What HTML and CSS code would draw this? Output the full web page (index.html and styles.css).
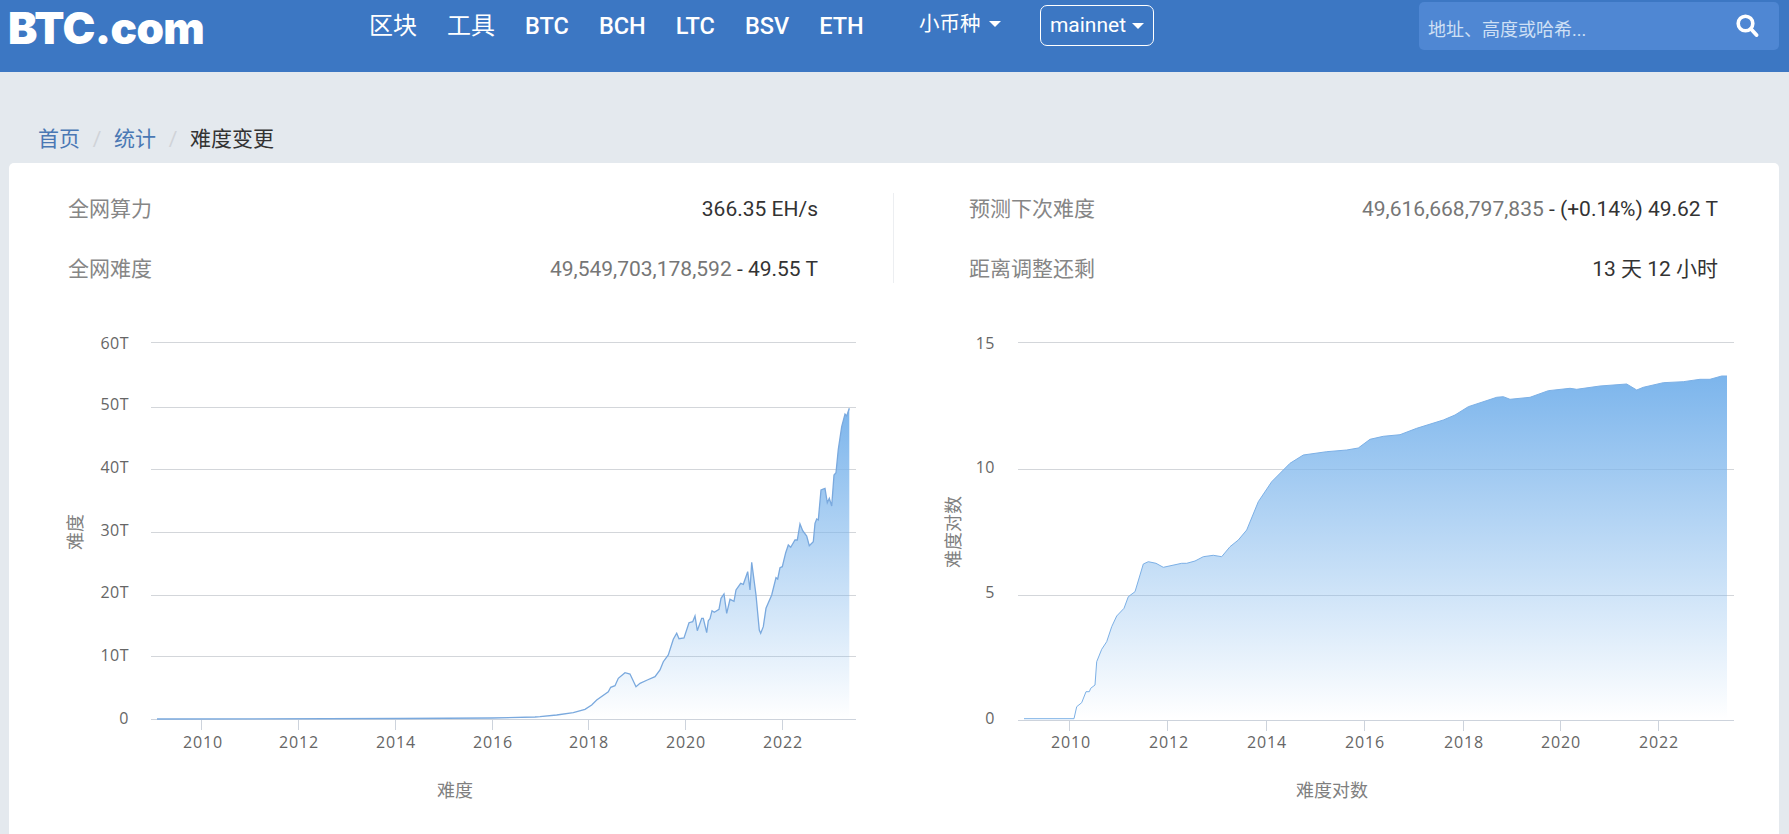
FILE: index.html
```html
<!DOCTYPE html>
<html lang="zh-CN">
<head>
<meta charset="utf-8">
<title>难度变更</title>
<link rel="stylesheet" href="styles.css">
</head>
<body>
<header class="topbar">
  <a class="logo">BTC.com</a>
  <nav class="nav">
    <a class="nav-item">区块</a>
    <a class="nav-item">工具</a>
    <a class="nav-item">BTC</a>
    <a class="nav-item">BCH</a>
    <a class="nav-item">LTC</a>
    <a class="nav-item">BSV</a>
    <a class="nav-item">ETH</a>
  </nav>
  <a class="coins">小币种<span class="caret"></span></a>
  <a class="network">mainnet<span class="caret"></span></a>
  <div class="search">
    <span class="search-text">地址、高度或哈希...</span>
    <svg class="search-icon" width="24" height="24" viewBox="0 0 24 24"><circle cx="10.500" cy="10.500" r="7.300" fill="none" stroke="#fff" stroke-width="3.600"/><path d="M16 16l5.500 6" stroke="#fff" stroke-width="3.800" stroke-linecap="round"/></svg>
  </div>
</header>

<ol class="crumbs">
  <li class="crumb-link">首页</li>
  <li class="crumb-sep">/</li>
  <li class="crumb-link">统计</li>
  <li class="crumb-sep">/</li>
  <li class="crumb-now">难度变更</li>
</ol>

<main class="card">
  <section class="stats">
    <div class="col col-left">
      <div class="row"><span class="label">全网算力</span><span class="value">366.35 EH/s</span></div>
      <div class="row"><span class="label">全网难度</span><span class="value"><span class="muted">49,549,703,178,592</span> - 49.55 T</span></div>
    </div>
    <div class="col col-right">
      <div class="row"><span class="label">预测下次难度</span><span class="value"><span class="muted">49,616,668,797,835</span> - (+0.14%) 49.62 T</span></div>
      <div class="row"><span class="label">距离调整还剩</span><span class="value">13 天 12 小时</span></div>
    </div>
  </section>

  <section class="charts">
    <svg class="chart chart-left" viewBox="60 330 830 504">
      <defs>
        <linearGradient id="fillL" x1="0" y1="0" x2="0" y2="1"><stop offset="0" stop-color="#7cb5ec"/><stop offset="1" stop-color="#7cb5ec" stop-opacity="0"/></linearGradient>
      </defs>
      <g class="grid">
        <path d="M151 342.500H856M151 407.500H856M151 469.500H856M151 532.500H856M151 595.500H856M151 656.500H856"/>
      </g>
      <path class="axis" d="M151 719.500H856M201.500 720V730M298.500 720V730M395.500 720V730M492.500 720V730M588.500 720V730M685.500 720V730M782.500 720V730"/>
      <path class="area" fill="url(#fillL)" d="M157 719L400 718.500L492 718L535 717L540 716.700L556.700 715L573.300 712.700L585 709.300L591.700 705L596.700 700L608.300 691.700L610.700 687.300L615 685.700L618.300 678.300L625 672.700L630 674L636 686.700L640 683.300L647.300 680L655 676.700L660 670L663.300 661.700L668.300 655L673.300 639.300L676.700 633.300L679 638.700L684 638L689 622.700L692.700 621.700L695 616L697.300 630.700L701.700 618.300L703.300 618.300L706.700 632.700L708.300 620.700L710 618.700L712 610.700L714.300 612.300L719 609.300L721 598.300L724 594L726.700 613.300L730 599.300L734 601.300L736 590L740.700 583.300L743.300 584.300L747.700 571.700L750 590L751.700 562.300L756 595L759.300 630L760.700 633.300L763.300 626.700L766 608.300L771.700 595L776 577.700L777.700 579L780 567.700L782.300 566.700L785.700 552.700L788.300 545L790.700 547.300L795 540L797.300 540L800 524L802.700 530.700L806.700 536L809.300 545.700L813.300 541.700L815 523.300L816.700 519L818.300 520L821 490L825 488.300L827.300 502.700L829.300 498.300L831.700 506L834 475L836 472.700L838.300 449.300L841.700 426.700L845 414L846.700 416L849.300 408.300V719Z"/>
      <path class="line line-strong" d="M157 719L400 718.500L492 718L535 717L540 716.700L556.700 715L573.300 712.700L585 709.300L591.700 705L596.700 700L608.300 691.700L610.700 687.300L615 685.700L618.300 678.300L625 672.700L630 674L636 686.700L640 683.300L647.300 680L655 676.700L660 670L663.300 661.700L668.300 655L673.300 639.300L676.700 633.300L679 638.700L684 638L689 622.700L692.700 621.700L695 616L697.300 630.700L701.700 618.300L703.300 618.300L706.700 632.700L708.300 620.700L710 618.700L712 610.700L714.300 612.300L719 609.300L721 598.300L724 594L726.700 613.300L730 599.300L734 601.300L736 590L740.700 583.300L743.300 584.300L747.700 571.700L750 590L751.700 562.300L756 595L759.300 630L760.700 633.300L763.300 626.700L766 608.300L771.700 595L776 577.700L777.700 579L780 567.700L782.300 566.700L785.700 552.700L788.300 545L790.700 547.300L795 540L797.300 540L800 524L802.700 530.700L806.700 536L809.300 545.700L813.300 541.700L815 523.300L816.700 519L818.300 520L821 490L825 488.300L827.300 502.700L829.300 498.300L831.700 506L834 475L836 472.700L838.300 449.300L841.700 426.700L845 414L846.700 416L849.300 408.300"/>
      <g class="ylabels">
        <text x="129" y="349">60T</text><text x="129" y="410">50T</text><text x="129" y="473">40T</text><text x="129" y="536">30T</text><text x="129" y="598">20T</text><text x="129" y="661">10T</text><text x="129" y="724">0</text>
      </g>
      <g class="xlabels">
        <text x="203" y="748">2010</text><text x="299" y="748">2012</text><text x="396" y="748">2014</text><text x="493" y="748">2016</text><text x="589" y="748">2018</text><text x="686" y="748">2020</text><text x="783" y="748">2022</text>
      </g>
      <text class="title" x="455" y="797">难度</text>
      <text class="title" transform="translate(82 532) rotate(-90)">难度</text>
    </svg>

    <svg class="chart chart-right" viewBox="900 330 860 504">
      <defs>
        <linearGradient id="fillR" x1="0" y1="0" x2="0" y2="1"><stop offset="0" stop-color="#7cb5ec"/><stop offset="1" stop-color="#7cb5ec" stop-opacity="0"/></linearGradient>
      </defs>
      <g class="grid">
        <path d="M1018 342.500H1734M1018 469.500H1734M1018 595.500H1734"/>
      </g>
      <path class="axis" d="M1018 720.500H1734M1069.500 721V731M1167.500 721V731M1266.500 721V731M1364.500 721V731M1463.500 721V731M1560.500 721V731M1658.500 721V731"/>
      <path class="area" fill="url(#fillR)" d="M1024 718.700L1074 718.700L1076.700 706.700L1081.700 702.700L1086 691.700L1089.300 691.700L1090.700 688.300L1095 685L1096.700 661.700L1101.700 649.300L1106.700 641.700L1111.700 626.700L1116.700 616L1124 608.300L1128.300 596.700L1135 591.700L1143.300 564L1148.300 561.700L1156 563.300L1163.300 567.300L1181.700 563.300L1186.700 563.300L1195 561L1203.300 556.700L1213.300 555.300L1221.700 556.700L1230 546.700L1238.300 540L1246.700 530L1258.300 501.700L1271.700 481.700L1290 463.300L1303.300 455L1326.700 451.700L1346.700 450L1358.300 448L1370 439.300L1383.300 436.300L1400 434.700L1416.700 428.300L1443.300 420L1455 415L1468.300 406.700L1496.700 397.300L1503.300 396.700L1510 399.300L1530 397.300L1548.300 390.700L1570 388.300L1576.700 389.300L1600 386L1626.700 384L1636.700 390L1643.300 387.300L1663.300 382.700L1683.300 381.700L1700 379.300L1710 379.300L1721.700 376L1727 376V719H1024Z"/>
      <path class="line" d="M1024 718.700L1074 718.700L1076.700 706.700L1081.700 702.700L1086 691.700L1089.300 691.700L1090.700 688.300L1095 685L1096.700 661.700L1101.700 649.300L1106.700 641.700L1111.700 626.700L1116.700 616L1124 608.300L1128.300 596.700L1135 591.700L1143.300 564L1148.300 561.700L1156 563.300L1163.300 567.300L1181.700 563.300L1186.700 563.300L1195 561L1203.300 556.700L1213.300 555.300L1221.700 556.700L1230 546.700L1238.300 540L1246.700 530L1258.300 501.700L1271.700 481.700L1290 463.300L1303.300 455L1326.700 451.700L1346.700 450L1358.300 448L1370 439.300L1383.300 436.300L1400 434.700L1416.700 428.300L1443.300 420L1455 415L1468.300 406.700L1496.700 397.300L1503.300 396.700L1510 399.300L1530 397.300L1548.300 390.700L1570 388.300L1576.700 389.300L1600 386L1626.700 384L1636.700 390L1643.300 387.300L1663.300 382.700L1683.300 381.700L1700 379.300L1710 379.300L1721.700 376L1727 376"/>
      <g class="ylabels">
        <text x="995" y="349">15</text><text x="995" y="473">10</text><text x="995" y="598">5</text><text x="995" y="724">0</text>
      </g>
      <g class="xlabels">
        <text x="1071" y="748">2010</text><text x="1169" y="748">2012</text><text x="1267" y="748">2014</text><text x="1365" y="748">2016</text><text x="1464" y="748">2018</text><text x="1561" y="748">2020</text><text x="1659" y="748">2022</text>
      </g>
      <text class="title" x="1332" y="797">难度对数</text>
      <text class="title" transform="translate(960 532) rotate(-90)">难度对数</text>
    </svg>
  </section>
</main>
</body>
</html>
```

FILE: styles.css
```css
* { box-sizing: border-box; }
html, body { margin: 0; height: 834px; overflow: hidden; }
body {
  background: #e4e9ee;
  font-family: Roboto, "Noto Sans CJK SC", sans-serif;
  color: #333;
}

.topbar {
  height: 72px;
  background: #3c77c3;
  display: flex;
  align-items: flex-start;
  padding-left: 8px;
  color: #fff;
}
.logo {
  width: 361px;
  flex: none;
  font-family: Inter, sans-serif;
  font-weight: 900;
  font-size: 44px;
  line-height: 56px;
  letter-spacing: -0.6px;
}
.nav { display: flex; gap: 30px; width: 497px; flex: none; padding-top: 10px; }
.nav-item { font-size: 23.500px; font-weight: 500; line-height: 32px; }
.nav-item:nth-child(-n+2) { font-size: 24px; font-weight: 400; }
.coins {
  width: 121px;
  flex: none;
  margin-left: 53px;
  font-size: 20.500px;
  line-height: 30px;
  padding-top: 9px;
  height: 39px;
  display: flex;
  align-items: center;
}
.caret {
  display: inline-block;
  width: 0;
  height: 0;
  margin-left: 8px;
  border-left: 6px solid transparent;
  border-right: 6px solid transparent;
  border-top: 6px solid #fff;
}
.network {
  width: 114px;
  height: 41px;
  flex: none;
  margin-top: 5px;
  padding-bottom: 2px;
  border: 1px solid #fff;
  border-radius: 7px;
  font-size: 21px;
  display: flex;
  align-items: center;
  justify-content: center;
}
.network .caret { margin-left: 6px; margin-top: 2px; }
.search {
  flex: none;
  width: 360px;
  height: 48px;
  margin: 2px 0 0 265px;
  padding: 0 20px 0 9px;
  background: #4f87d3;
  border-radius: 5px;
  display: flex;
  align-items: center;
  justify-content: space-between;
}
.search-text { font-size: 18px; color: #cfe0f5; margin-top: 3px; }
.search-icon { margin-top: -2px; }

.crumbs {
  list-style: none;
  margin: 0;
  padding: 52px 0 0 38px;
  height: 91px;
  display: flex;
  font-size: 21px;
  line-height: 30px;
}
.crumb-link { color: #4a78b4; }
.crumb-sep { color: #d0d3d8; width: 34px; text-align: center; }
.crumb-now { color: #333; }

.card {
  margin: 0 10px 0 9px;
  background: #fff;
  border-radius: 5px 5px 0 0;
  height: 700px;
}
.stats { display: flex; padding: 30px 61px 0 59px; }
.col { flex: none; height: 90px; display: flex; flex-direction: column; gap: 28px; }
.col-left { width: 750px; }
.col-right { width: 825px; margin-left: 75px; padding-left: 75px; border-left: 1px solid #eceef1; }
.row { display: flex; justify-content: space-between; line-height: 32px; flex: none; }
.label { font-size: 21px; color: #868686; }
.value { font-size: 21px; color: #333; }
.muted { color: #767676; }

.charts { display: flex; gap: 10px; margin: 47px 0 0 51px; }
.chart { display: block; height: 504px; flex: none; }
.chart-left { width: 830px; }
.chart-right { width: 860px; }
.grid path { stroke: #d3d6da; stroke-width: 1; fill: none; }
.axis { stroke: #cdd3dc; stroke-width: 1; fill: none; }
.line { fill: none; stroke: #7cb0e6; stroke-width: 1; }
.line-strong { stroke: #7aa9de; stroke-width: 1.300; }
.ylabels text {
  font-family: "Open Sans", sans-serif;
  font-size: 16px;
  fill: #666;
  text-anchor: end;
  letter-spacing: .5px;
}
.xlabels text {
  font-family: "Open Sans", sans-serif;
  font-size: 16px;
  fill: #666;
  text-anchor: middle;
  letter-spacing: .9px;
}
.title {
  font-family: "Noto Sans CJK SC", sans-serif;
  font-size: 18px;
  fill: #808080;
  text-anchor: middle;
}
```
